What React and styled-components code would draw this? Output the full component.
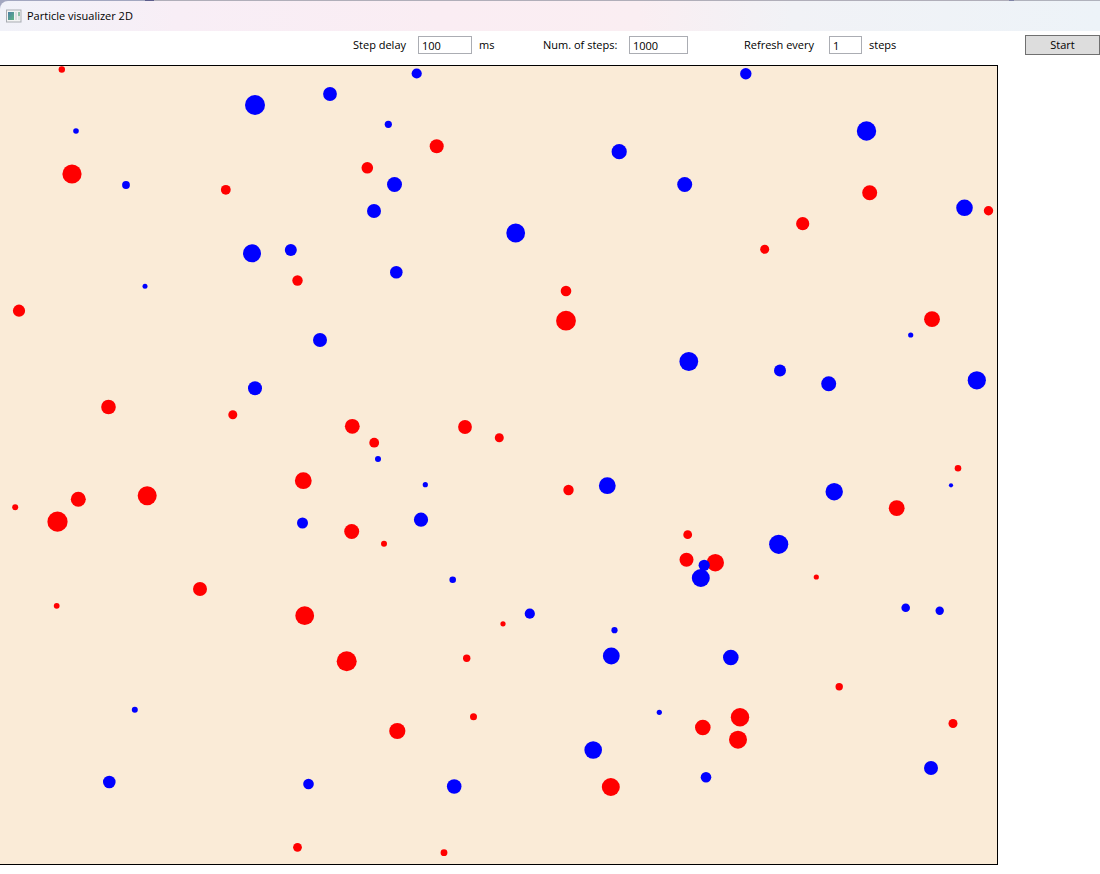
import React, { useState } from 'react';
import styled, { createGlobalStyle } from 'styled-components';

const GlobalStyle = createGlobalStyle`
    * {
        box-sizing: border-box;
    }
    body {
        margin: 0;
        background-color: #fff;
        color: #000;
        font-family: 'Open Sans', 'Noto Sans', sans-serif;
        font-size: 11px;
        line-height: 16px;
    }
`;

const TitleBar = styled.header`
    background: linear-gradient(90deg, #a3a7c0 0 145px, #5d5d8c 145px 154px, #b0aeb9 154px 1009px, #8084a6 1009px 1014px, #b0b2bc 1014px);
    padding-top: 1px;
`;
const TitleBarInner = styled.div`
    display: flex;
    align-items: center;
    gap: 5px;
    height: 30px;
    padding: 0 6px;
    border-top-left-radius: 8px;
    background: linear-gradient(90deg, #f1f2f9 0%, #f8eef6 16%, #faedf3 40%, #faeef2 58%, #f1f2f6 72%, #edf3f8 100%);
`;
const Title = styled.h1`
    margin: 0;
    font-size: 11px;
    font-weight: 400;
`;
const AppIcon = styled.svg`
    width: 16px;
    height: 14px;
`;

const Toolbar = styled.form`
    display: grid;
    grid-template-columns: 1fr 190px 201px 281px 75px;
    align-items: center;
    height: 34px;
    padding-bottom: 6px;
`;
const Field = styled.div`
    display: flex;
    align-items: center;
    grid-column: ${props => props.$column};
`;
const Label = styled.label`
    width: ${props => props.$width};
`;
const NumberBox = styled.input`
    width: ${props => props.$width};
    height: 18px;
    margin-right: 7px;
    padding: 0 3px;
    border: 1px solid #abadb3;
    background-color: #fff;
    color: #000;
    font: inherit;
`;
const StartButton = styled.button`
    height: 20px;
    padding: 0;
    border: 1px solid #707070;
    background-color: #ddd;
    color: #000;
    font: inherit;
    line-height: 16px;
`;

const Board = styled.main`
    margin-right: 102px;
    border: 1px solid #000;
    border-left: none;
    background-color: #faebd7;
`;
const Space = styled.svg`
    display: block;
    width: 100%;
    height: auto;
`;

// x, y, radius
const redParticles = [
    [61.8, 3.5, 3.2], [72, 108, 9.6], [225.8, 123.8, 4.9], [297.5, 214.5, 5.2],
    [19, 244.7, 6.1], [436.7, 80.2, 7], [367.3, 101.8, 5.8], [566, 225, 5.3],
    [566, 254.7, 9.9], [869.7, 126.8, 7.5], [802.7, 157.7, 6.6], [988.5, 144.7, 4.7],
    [764.7, 183.3, 4.5], [932, 253.2, 7.9], [108.5, 341, 7.3], [232.8, 348.8, 4.5],
    [303.3, 414.7, 8.4], [147.2, 429.7, 9.5], [78.3, 433.2, 7.5], [15.2, 441.2, 3],
    [57.5, 455.7, 10.1], [200, 523, 7], [352.3, 360.3, 7.4], [374.2, 376.7, 4.9],
    [465, 361, 6.9], [499.3, 371.7, 4.5], [351.7, 465.5, 7.5], [384, 477.7, 3],
    [568.5, 424, 5.2], [958, 402.3, 3.3], [896.7, 442.2, 7.9], [687.7, 468.7, 4.4],
    [686.5, 493.7, 7], [715.3, 496.7, 8.7], [816.3, 511, 2.6], [56.7, 539.8, 2.9],
    [304.7, 549.7, 9.4], [346.7, 595.2, 10], [466.7, 592.3, 3.7], [473.5, 650.7, 3.5],
    [397.3, 665, 8.1], [297.5, 781.3, 4.4], [444, 786.7, 3.4], [503, 557.8, 2.6],
    [740, 651.3, 9.2], [702.8, 661.5, 7.8], [738, 673.7, 9], [610.8, 721, 9],
    [839.2, 620.7, 3.7], [953, 657.5, 4.5],
];
const blueParticles = [
    [255, 39, 10], [330, 28, 6.9], [76, 65, 2.8], [126, 119, 3.9],
    [252, 187.3, 9], [290.8, 184, 6], [145, 220.2, 2.5], [416.7, 7.5, 5.1],
    [388.3, 58.3, 3.6], [394.5, 118.5, 7.5], [374, 145, 7], [515.7, 167, 9.4],
    [619.2, 85.7, 7.6], [396.3, 206.3, 6.3], [745.8, 7.7, 5.7], [866.5, 65, 9.7],
    [684.7, 118.5, 7.5], [964.5, 141.8, 8.3], [320, 274, 7], [255, 322.3, 7],
    [302.5, 457, 5.5], [378, 393, 3], [425.3, 418.7, 2.6], [421, 453.7, 7.1],
    [452.7, 513.7, 3.3], [607.3, 419.7, 8.4], [688.8, 295.5, 9.4], [780, 304.5, 6],
    [828.7, 317.7, 7.5], [910.7, 269, 2.6], [976.8, 314.3, 9.1], [951, 419.3, 2.1],
    [834.2, 425.7, 8.7], [778.7, 478.3, 9.6], [704.2, 499.3, 5.6], [700.8, 512, 9],
    [134.8, 643.7, 3], [109.3, 716, 6.3], [308.5, 718, 5.3], [454.2, 720.5, 7.3],
    [529.8, 547.7, 5.1], [614.5, 564.2, 3.1], [611.3, 590, 8.4], [730.8, 591.5, 7.8],
    [659.3, 646.3, 2.6], [593.2, 684, 8.8], [706, 711.2, 5.3], [905.7, 541.8, 4.3],
    [939.7, 544.8, 4.2], [931, 702, 7],
];

const Particles = ({ items, color }) => (
    <g fill={color}>
        {items.map(([x, y, r]) => <circle key={`${x}-${y}`} cx={x} cy={y} r={r} />)}
    </g>
)

const WindowIcon = () => (
    <AppIcon viewBox="0 0 16 14" aria-hidden="true">
        <defs>
            <linearGradient id="pane" x1="0" y1="0" x2="1" y2="1">
                <stop offset="0" stopColor="#4a7fa5" />
                <stop offset="1" stopColor="#5fb583" />
            </linearGradient>
        </defs>
        <rect x="0.5" y="1" width="14.5" height="12" fill="#f3f4f4" stroke="#a9adb3" />
        <rect x="2" y="3" width="6" height="8" fill="url(#pane)" />
        <rect x="9" y="3" width="2" height="8" fill="#dcdfe0" />
        <rect x="12" y="3" width="2" height="4" fill="#8fc0a8" />
        <rect x="12" y="7" width="2" height="4" fill="#e2e5e5" />
    </AppIcon>
)

const App = () => {
    const [delay, setDelay] = useState('100');
    const [steps, setSteps] = useState('1000');
    const [refresh, setRefresh] = useState('1');

    return(
        <>
            <GlobalStyle />
            <TitleBar>
                <TitleBarInner>
                    <WindowIcon />
                    <Title>Particle visualizer 2D</Title>
                </TitleBarInner>
            </TitleBar>
            <Toolbar onSubmit={e => e.preventDefault()}>
                <Field $column={2}>
                    <Label htmlFor="delay" $width="65px">Step delay</Label>
                    <NumberBox id="delay" $width="54px" value={delay} onChange={e => setDelay(e.target.value)} />
                    <span>ms</span>
                </Field>
                <Field $column={3}>
                    <Label htmlFor="steps" $width="86px">Num. of steps:</Label>
                    <NumberBox id="steps" $width="59px" value={steps} onChange={e => setSteps(e.target.value)} />
                </Field>
                <Field $column={4}>
                    <Label htmlFor="refresh" $width="85px">Refresh every</Label>
                    <NumberBox id="refresh" $width="33px" value={refresh} onChange={e => setRefresh(e.target.value)} />
                    <span>steps</span>
                </Field>
                <StartButton type="submit">Start</StartButton>
            </Toolbar>
            <Board>
                <Space viewBox="0 0 997 798" role="img" aria-label="Particles">
                    <Particles items={redParticles} color="#f00" />
                    <Particles items={blueParticles} color="#00f" />
                </Space>
            </Board>
        </>
    )
}

export default App;
